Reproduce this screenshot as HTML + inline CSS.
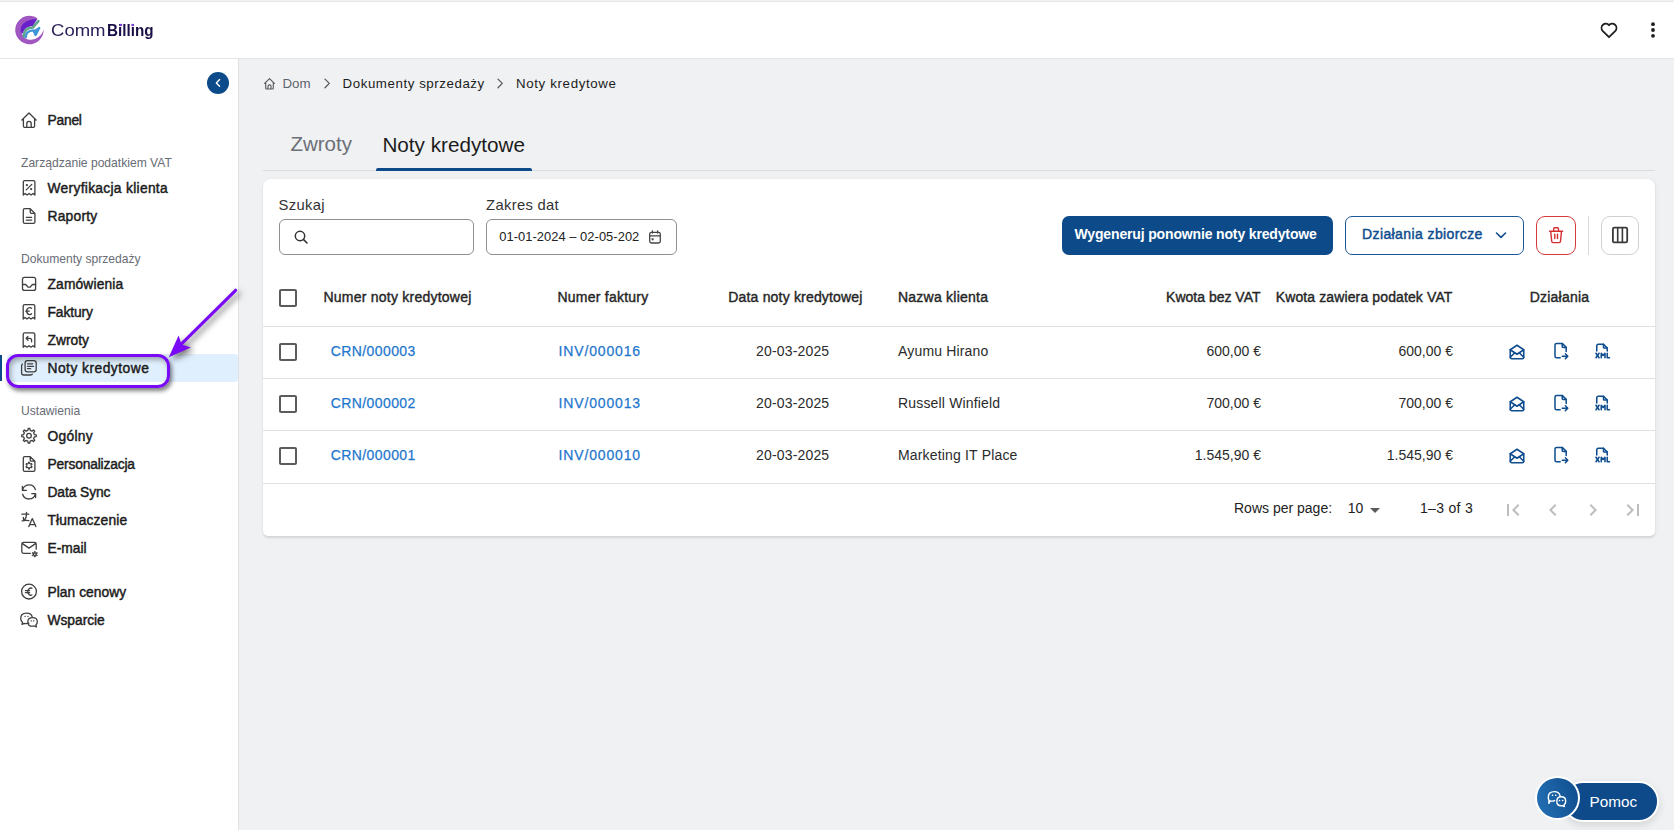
<!DOCTYPE html>
<html><head><meta charset="utf-8">
<style>
*{box-sizing:border-box;margin:0;padding:0}
html,body{width:1674px;height:830px;overflow:hidden;background:#f0f1f3;font-family:"Liberation Sans",sans-serif;color:#1f1f1f;position:relative}
.abs{position:absolute}
.t{position:absolute;white-space:nowrap;line-height:1}
.nav{font-size:13.8px;font-weight:400;color:#1c1c1c;letter-spacing:0.3px;-webkit-text-stroke:0.45px #1c1c1c}
.sec{font-size:12.1px;color:#686c75}
.hd{font-size:14px;font-weight:400;color:#262626;letter-spacing:0.23px;-webkit-text-stroke:0.4px #262626}
.cell{font-size:14px;color:#2b2b2b;letter-spacing:0.17px}
.lnk{font-size:14px;color:#1f77cd;letter-spacing:0.4px;-webkit-text-stroke:0.25px #1f77cd}
.rowline{position:absolute;left:263px;width:1392px;height:1px;background:#e0e0e0}
</style></head><body>
<!-- HEADER -->
<div class="abs" style="left:0;top:0;width:1674px;height:1px;background:#f1f1f1"></div><div class="abs" style="left:0;top:1px;width:1674px;height:1px;background:#e8e8e8"></div>
<div class="abs" style="left:0;top:2px;width:1674px;height:56px;background:#fff"></div>
<div class="abs" style="left:0;top:58px;width:1674px;height:1px;background:#e3e4e7"></div>

<svg class="abs" style="left:12px;top:12px" width="36" height="36" viewBox="0 0 36 36">
 <path d="M25.6 6.4 A14.2 14.2 0 1 0 31.6 17.3 C 30.2 24.5, 22 29.3, 15.8 27.4 C 11 25.8, 9 21, 9.6 17 Z" fill="#a057c2"/>
 <path d="M8.8 20.5 C 7.8 13, 12.5 7.2, 25.3 6.9 L20.8 14.3 C 15.6 14.3, 12.1 16.5, 10.9 21.5 Z" fill="#6a20c8"/>
 <path d="M11.7 24.4 C 11.8 18.4, 15.3 15.6, 20.9 15.4 L26.4 9.2" fill="none" stroke="#5ea58b" stroke-width="2.5" stroke-linecap="round"/>
 <path d="M13.6 26 C 13.6 21.2, 15.8 18.6, 21.3 18.3 L23.6 23 L27.6 15.2" fill="none" stroke="#3f95da" stroke-width="2.3" stroke-linejoin="round"/>
 <path d="M21.5 18.2 L27.9 14.6 L24 23.6 Z" fill="#3f95da"/>
</svg>
<div class="t" style="left:50.8px;top:21.5px;font-size:17px;color:#2a1f58;transform:scaleX(1.09);transform-origin:0 0">Comm</div>
<div class="t" style="left:106.6px;top:21.5px;font-size:17px;font-weight:700;color:#1b1046;transform:scaleX(0.895);transform-origin:0 0">Billing</div>

<svg class="abs" style="left:110px;top:20px" width="26" height="8" viewBox="110 20 26 8"><circle cx="121" cy="24.9" r="1.25" fill="#7b3fe4"/><circle cx="132.6" cy="24.9" r="1.25" fill="#7b3fe4"/></svg>
<!-- header right icons -->
<svg class="abs" style="left:1598px;top:18.5px" width="22" height="21" viewBox="0 0 22 21">
  <path d="M11 18.2 L4.6 11.8 A4.1 4.1 0 0 1 11 6.2 A4.1 4.1 0 0 1 17.4 11.8 Z" fill="none" stroke="#1f1f1f" stroke-width="1.8" stroke-linejoin="round"/>
</svg>
<svg class="abs" style="left:1646px;top:18px" width="14" height="24" viewBox="0 0 14 24">
  <circle cx="7" cy="6.2" r="1.9" fill="#1f1f1f"/><circle cx="7" cy="12" r="1.9" fill="#1f1f1f"/><circle cx="7" cy="17.8" r="1.9" fill="#1f1f1f"/>
</svg>

<!-- SIDEBAR -->
<div class="abs" style="left:0;top:59px;width:238px;height:771px;background:#fff"></div>
<div class="abs" style="left:238px;top:59px;width:1px;height:771px;background:#dfe0e3"></div>

<!-- collapse button -->
<svg class="abs" style="left:206px;top:71px" width="24" height="24" viewBox="0 0 24 24"><circle cx="12" cy="12" r="11" fill="#0c4a89"/><path d="M13.6 8.6 L10.3 11.9 L13.6 15.2" fill="none" stroke="#fff" stroke-width="1.4" stroke-linecap="round" stroke-linejoin="round"/></svg>

<!-- highlight -->
<div class="abs" style="left:7px;top:354px;width:231px;height:28px;background:#e0effd;border-radius:4px"></div>
<div class="abs" style="left:0;top:355px;width:2px;height:26px;background:#0c4a89"></div>

<svg class="abs" style="left:0;top:0" width="45" height="640" viewBox="0 0 45 640" fill="none" stroke="#3f3f3f" stroke-width="1.3" stroke-linecap="round" stroke-linejoin="round">
 <!-- home -->
 <path d="M21.9 120 L29 113 L36.1 120 M23.4 118.4 V126.1 Q23.4 127.4 24.7 127.4 H33.3 Q34.6 127.4 34.6 126.1 V118.4 M26.8 127.3 V123.5 A2.2 2.2 0 0 1 31.2 123.5 V127.3"/>
 <!-- receipt % -->
 <path d="M23.3 195 V182.1 Q23.3 180.6 24.8 180.6 H33.4 Q34.9 180.6 34.9 182.1 V195 L33.1 193.5 L31.1 195 L29.1 193.5 L27.1 195 L25.1 193.5 Z"/>
 <path d="M26.2 189.9 L31.8 184.4"/>
 <circle cx="26.9" cy="185.1" r="1.15" fill="#3f3f3f" stroke="none"/><circle cx="31.1" cy="189.1" r="1.15" fill="#3f3f3f" stroke="none"/>
 <!-- document -->
 <path d="M24.8 208.7 H30.2 L34.9 213.4 V221.9 Q34.9 223.3 33.5 223.3 H24.8 Q23.3 223.3 23.3 221.9 V210.2 Q23.3 208.7 24.8 208.7 Z M30.2 208.9 V212 Q30.2 213.3 31.5 213.3 H34.7 M26.3 217.3 H31.7 M26.3 220.1 H31.7"/>
 <!-- tray -->
 <rect x="22.5" y="277.4" width="13.1" height="13" rx="2"/>
 <path d="M22.5 284.5 H25.2 Q26 284.5 26.6 285.3 L27.3 286.3 Q27.9 287.2 28.8 287.2 H29.4 Q30.3 287.2 30.9 286.3 L31.6 285.3 Q32.2 284.5 33 284.5 H35.6"/>
 <!-- receipt euro -->
 <path d="M23.2 319 V306.1 Q23.2 304.6 24.7 304.6 H33.3 Q34.8 304.6 34.8 306.1 V319 L33 317.5 L31 319 L29 317.5 L27 319 L25 317.5 Z"/>
 <path d="M31.6 308.4 A3 3.5 0 1 0 31.6 313.8 M25.8 311.2 H29.2"/>
 <!-- receipt return -->
 <path d="M23.2 347.2 V334.3 Q23.2 332.8 24.7 332.8 H33.3 Q34.8 332.8 34.8 334.3 V347.2 L33 345.7 L31 347.2 L29 345.7 L27 347.2 L25 345.7 Z"/>
 <path d="M28 336.4 L26.1 338.3 L28 340.2 M26.3 338.3 H29.6 Q31.6 338.3 31.6 340.3 V341.8"/>
 <!-- copy -->
 <rect x="25.1" y="360.7" width="11.1" height="11.1" rx="2.4"/>
 <path d="M27.5 363.8 H32.7 M27.5 366.3 H33.6 M27.5 368.7 H30.6 M22.4 364.1 Q21.6 364.6 21.6 366.1 V372.9 Q21.6 375 23.7 375 H30.5 Q31.9 375 32.4 374.2"/>
 <!-- gear -->
 <path d="M27.82 430.38 L28.14 428.50 L29.86 428.50 L30.18 430.38 L31.97 431.12 L33.52 430.02 L34.73 431.23 L33.63 432.78 L34.37 434.57 L36.25 434.89 L36.25 436.61 L34.37 436.93 L33.63 438.72 L34.73 440.27 L33.52 441.48 L31.97 440.38 L30.18 441.12 L29.86 443.00 L28.14 443.00 L27.82 441.12 L26.03 440.38 L24.48 441.48 L23.27 440.27 L24.37 438.72 L23.63 436.93 L21.75 436.61 L21.75 434.89 L23.63 434.57 L24.37 432.78 L23.27 431.23 L24.48 430.02 L26.03 431.12Z"/>
 <circle cx="29" cy="435.75" r="2.3"/>
 <!-- doc gear -->
 <path d="M24.8 456.6 H30.2 L34.9 461.3 V469.9 Q34.9 471.3 33.5 471.3 H24.8 Q23.3 471.3 23.3 469.9 V458.1 Q23.3 456.6 24.8 456.6 Z M30.2 456.8 V459.9 Q30.2 461.2 31.5 461.2 H34.7"/>
 <path d="M28.38 463.49 L28.48 462.34 L29.52 462.34 L29.62 463.49 L30.51 464.00 L31.56 463.52 L32.08 464.42 L31.14 465.09 L31.14 466.11 L32.08 466.78 L31.56 467.68 L30.51 467.20 L29.62 467.71 L29.52 468.86 L28.48 468.86 L28.38 467.71 L27.49 467.20 L26.44 467.68 L25.92 466.78 L26.86 466.11 L26.86 465.09 L25.92 464.42 L26.44 463.52 L27.49 464.00Z" stroke-width="1.1"/>
 <!-- sync -->
 <path d="M22.6 490.3 A6.6 6.6 0 0 1 35.4 489.6 M22.4 486.4 V490.4 H26.3 M35.4 493.6 A6.6 6.6 0 0 1 22.6 494.3 M35.6 497.6 V493.7 H31.8"/>
 <!-- translate -->
 <path d="M21.9 514.2 H28.8 M26.5 512.3 V514.6 Q26.4 518.2 24.4 520.2 M23.3 517.5 Q23.5 519.4 23.8 520.4 M22.1 520.9 Q25.5 520.1 28.9 520.7 M28.8 526.6 L32.3 518.6 L35.9 526.6 M29.9 524.6 H34.8"/>
 <!-- mail gear -->
 <path d="M30.3 553.4 H23.6 Q21.8 553.4 21.8 551.6 V544.1 Q21.8 542.3 23.6 542.3 H34.4 Q36.2 542.3 36.2 544.1 V549.2 M22.1 543.4 L29 548.1 L35.9 543.4"/>
 <path d="M34.26 552.38 L34.35 551.34 L35.25 551.34 L35.34 552.38 L36.11 552.82 L37.05 552.37 L37.51 553.16 L36.65 553.76 L36.65 554.64 L37.51 555.24 L37.05 556.03 L36.11 555.58 L35.34 556.02 L35.25 557.06 L34.35 557.06 L34.26 556.02 L33.49 555.58 L32.55 556.03 L32.09 555.24 L32.95 554.64 L32.95 553.76 L32.09 553.16 L32.55 552.37 L33.49 552.82Z" fill="#3f3f3f" stroke-width="0.6"/><circle cx="34.8" cy="554.2" r="0.7" fill="#fff" stroke="none"/>
 <!-- euro circle -->
 <circle cx="29" cy="591.6" r="7.4"/>
 <path d="M31.9 588.2 A3.1 3.6 0 1 0 31.9 595 M25.4 590.6 H29.6 M25.4 592.7 H29.6"/>
 <!-- chat -->
 <path d="M28.9 623.2 Q27.8 623.6 26.5 623.6 Q25.3 623.6 24.2 623.3 L22 624.4 L22.5 622.2 Q20.7 620.8 20.7 618.5 Q20.7 613.1 26.5 613.1 Q31.3 613.1 32.2 616.8"/>
 <path d="M32.5 617.6 Q37.3 617.6 37.3 621.7 Q37.3 623.8 35.9 625 L36.4 627 L34.2 626 Q33.4 626.2 32.5 626.2 Q27.8 626.2 27.8 621.9 Q27.8 617.6 32.5 617.6 Z"/>
 <path d="M24.9 616.3 H25.2 M27.8 616.3 H28.1 M31.2 620.9 H31.4 M33.6 620.9 H33.8" stroke-width="1.2"/>
</svg>

<div class="t nav" style="left:47.6px;top:114.0px;letter-spacing:-0.25px">Panel</div>
<div class="t sec" style="left:21px;top:157px">Zarządzanie podatkiem VAT</div>
<div class="t nav" style="left:47.5px;top:181.7px">Weryfikacja klienta</div>
<div class="t nav" style="left:47.5px;top:209.7px;letter-spacing:0.23px">Raporty</div>
<div class="t sec" style="left:21px;top:253px">Dokumenty sprzedaży</div>
<div class="t nav" style="left:47.5px;top:278.2px;letter-spacing:0.14px">Zamówienia</div>
<div class="t nav" style="left:47.5px;top:306.0px;letter-spacing:-0.08px">Faktury</div>
<div class="t nav" style="left:47.5px;top:334.0px;letter-spacing:0.0px">Zwroty</div>
<div class="t nav" style="left:47.5px;top:361.7px;letter-spacing:0.48px">Noty kredytowe</div>
<div class="t sec" style="left:21px;top:405.1px">Ustawienia</div>
<div class="t nav" style="left:47.5px;top:430.2px">Ogólny</div>
<div class="t nav" style="left:47.5px;top:458.2px;letter-spacing:-0.17px">Personalizacja</div>
<div class="t nav" style="left:47.5px;top:486.0px;letter-spacing:-0.09px">Data Sync</div>
<div class="t nav" style="left:47.5px;top:514.0px;letter-spacing:0.14px">Tłumaczenie</div>
<div class="t nav" style="left:47.5px;top:542.2px;letter-spacing:0.0px">E-mail</div>
<div class="t nav" style="left:47.5px;top:586.2px;letter-spacing:0.04px">Plan cenowy</div>
<div class="t nav" style="left:47.5px;top:614.0px;letter-spacing:-0.03px">Wsparcie</div>

<!-- breadcrumb -->
<svg class="abs" style="left:0;top:0" width="520" height="100" viewBox="0 0 520 100" fill="none" stroke="#5a5a5a" stroke-width="1.15" stroke-linecap="round" stroke-linejoin="round">
 <path d="M264.6 83.4 L269.5 78.6 L274.4 83.4 M265.7 82.4 V88.2 Q265.7 89 266.5 89 H272.5 Q273.3 89 273.3 88.2 V82.4 M268 88.9 V86.3 A1.5 1.5 0 0 1 271 86.3 V88.9"/>
 <path d="M325 79.1 L329.3 83.4 L325 87.7" stroke-width="1.3"/>
 <path d="M498 79.1 L502.3 83.4 L498 87.7" stroke-width="1.3"/>
</svg>
<div class="t" style="left:282.5px;top:76.6px;font-size:13.3px;color:#5d636c">Dom</div>
<div class="t" style="left:342.6px;top:76.6px;font-size:13.3px;color:#1c1c1c;letter-spacing:0.56px">Dokumenty sprzedaży</div>
<div class="t" style="left:516px;top:76.6px;font-size:13.3px;color:#1c1c1c;letter-spacing:0.64px">Noty kredytowe</div>

<!-- tabs -->
<div class="t" style="left:290.4px;top:133.6px;font-size:20.5px;color:#6b6f76">Zwroty</div>
<div class="t" style="left:382.4px;top:134.6px;font-size:20.7px;color:#1c1c1c">Noty kredytowe</div>
<div class="abs" style="left:263px;top:170px;width:1392px;height:1px;background:#d9dbe0"></div>
<div class="abs" style="left:376px;top:168px;width:156px;height:3px;background:#0c4a89;border-radius:2px 2px 0 0"></div>

<!-- card -->
<div class="abs" style="left:263px;top:178.6px;width:1392px;height:357.6px;background:#fff;border-radius:8px 8px 5px 5px;box-shadow:0 1.5px 2px rgba(0,0,0,0.09), 1px 1px 5px rgba(0,0,0,0.05)"></div>

<div class="t" style="left:278.6px;top:198.3px;font-size:14.8px;color:#333;letter-spacing:0.3px">Szukaj</div>
<div class="abs" style="left:279px;top:219px;width:195px;height:36px;border:1px solid #8f8f8f;border-radius:6px"></div>
<svg class="abs" style="left:289.6px;top:225.5px" width="22" height="22" viewBox="0 0 22 22"><circle cx="10" cy="10" r="4.7" fill="none" stroke="#333" stroke-width="1.5"/><path d="M13.4 13.4 L17 17" stroke="#333" stroke-width="1.6" stroke-linecap="round"/></svg>

<div class="t" style="left:486.1px;top:198.3px;font-size:14.8px;color:#333;letter-spacing:0.3px">Zakres dat</div>
<div class="abs" style="left:486px;top:219px;width:191px;height:36px;border:1px solid #8f8f8f;border-radius:6px"></div>
<div class="t" style="left:499.2px;top:230.8px;font-size:12.9px;color:#222;letter-spacing:0.05px">01-01-2024 – 02-05-202</div>
<svg class="abs" style="left:640px;top:222px" width="30" height="30" viewBox="0 0 30 30" fill="none" stroke="#444" stroke-width="1.3" stroke-linecap="round"><rect x="9.7" y="10.4" width="10.6" height="10.6" rx="1.8"/><path d="M9.8 13.9 H20.2 M12.4 8.8 V11 M17.6 8.8 V11"/><rect x="11.6" y="16.3" width="2" height="2" fill="#444" stroke="none"/></svg>

<!-- buttons -->
<div class="abs" style="left:1062px;top:216px;width:271px;height:39px;background:#0c4a89;border-radius:7px"></div>
<div class="t" style="left:1074.5px;top:227.2px;font-size:14px;font-weight:700;color:#fff;letter-spacing:-0.15px">Wygeneruj ponownie noty kredytowe</div>
<div class="abs" style="left:1345px;top:216px;width:179px;height:39px;border:1px solid #1b5698;border-radius:7px"></div>
<div class="t" style="left:1362px;top:227.2px;font-size:14px;font-weight:400;color:#0f4d8e;letter-spacing:0.4px;-webkit-text-stroke:0.45px #0f4d8e">Działania zbiorcze</div>
<svg class="abs" style="left:1490px;top:224px" width="22" height="22" viewBox="0 0 22 22"><path d="M6.5 9 L11 13.4 L15.5 9" fill="none" stroke="#0f4d8e" stroke-width="1.6" stroke-linecap="round" stroke-linejoin="round"/></svg>
<div class="abs" style="left:1536px;top:216px;width:40px;height:39px;border:1px solid #d33a3a;border-radius:9px"></div>
<svg class="abs" style="left:1546px;top:225px" width="20" height="20" viewBox="0 0 20 20" fill="none" stroke="#d32f2f" stroke-width="1.4" stroke-linecap="round" stroke-linejoin="round"><path d="M3.6 6.3 H16.6 M7.7 6.3 V3.7 Q7.7 2.8 8.6 2.8 H11.6 Q12.5 2.8 12.5 3.7 V6.3 M4.7 6.3 L5.7 16.3 Q5.8 17.6 7.1 17.6 H13.1 Q14.4 17.6 14.5 16.3 L15.5 6.3 M8.8 9.2 V13.6 M11.5 9.2 V13.6"/></svg>
<div class="abs" style="left:1588px;top:216px;width:1px;height:39px;background:#dadada"></div>
<div class="abs" style="left:1601px;top:216px;width:38px;height:39px;border:1px solid #d0d0d0;border-radius:9px"></div>
<svg class="abs" style="left:1610px;top:225px" width="20" height="20" viewBox="0 0 20 20" fill="none" stroke="#3a3a3a" stroke-width="1.8" stroke-linejoin="round"><rect x="2.9" y="2.6" width="14.3" height="14.8" rx="1.4"/><path d="M7.7 2.6 V17.4 M12.4 2.6 V17.4" stroke-width="1.6"/></svg>

<!-- checkboxes -->
<svg class="abs" style="left:276px;top:286px" width="24" height="24" viewBox="0 0 24 24"><path fill="#5c5c5c" d="M19 5v14H5V5h14m0-2H5c-1.11 0-2 .9-2 2v14c0 1.1.89 2 2 2h14c1.11 0 2-.9 2-2V5c0-1.1-.89-2-2-2z"/></svg>
<svg class="abs" style="left:276px;top:340px" width="24" height="24" viewBox="0 0 24 24"><path fill="#5c5c5c" d="M19 5v14H5V5h14m0-2H5c-1.11 0-2 .9-2 2v14c0 1.1.89 2 2 2h14c1.11 0 2-.9 2-2V5c0-1.1-.89-2-2-2z"/></svg>
<svg class="abs" style="left:276px;top:392px" width="24" height="24" viewBox="0 0 24 24"><path fill="#5c5c5c" d="M19 5v14H5V5h14m0-2H5c-1.11 0-2 .9-2 2v14c0 1.1.89 2 2 2h14c1.11 0 2-.9 2-2V5c0-1.1-.89-2-2-2z"/></svg>
<svg class="abs" style="left:276px;top:444px" width="24" height="24" viewBox="0 0 24 24"><path fill="#5c5c5c" d="M19 5v14H5V5h14m0-2H5c-1.11 0-2 .9-2 2v14c0 1.1.89 2 2 2h14c1.11 0 2-.9 2-2V5c0-1.1-.89-2-2-2z"/></svg>

<!-- table header -->
<div class="t hd" style="left:323.5px;top:289.9px">Numer noty kredytowej</div>
<div class="t hd" style="left:557.5px;top:289.9px">Numer faktury</div>
<div class="t hd" style="left:728.3px;top:289.9px;letter-spacing:0.18px">Data noty kredytowej</div>
<div class="t hd" style="left:898px;top:289.9px">Nazwa klienta</div>
<div class="t hd" style="right:413.5px;top:289.9px;letter-spacing:0">Kwota bez VAT</div>
<div class="t hd" style="right:221.5px;top:289.9px;letter-spacing:0.12px">Kwota zawiera podatek VAT</div>
<div class="t hd" style="left:1529.7px;top:289.9px">Działania</div>
<div class="rowline" style="top:326px"></div>

<!-- rows -->
<div class="t lnk" style="left:330.8px;top:344.1px">CRN/000003</div>
<div class="t lnk" style="left:558.6px;letter-spacing:0.84px;top:344.1px">INV/000016</div>
<div class="t cell" style="left:756px;top:343.8px">20-03-2025</div>
<div class="t cell" style="left:898px;top:343.8px">Ayumu Hirano</div>
<div class="t cell" style="right:413px;top:343.8px;letter-spacing:0">600,00 €</div>
<div class="t cell" style="right:221px;top:343.8px;letter-spacing:0">600,00 €</div>
<div class="rowline" style="top:378px"></div>

<div class="t lnk" style="left:330.8px;top:396.1px">CRN/000002</div>
<div class="t lnk" style="left:558.6px;letter-spacing:0.84px;top:396.1px">INV/000013</div>
<div class="t cell" style="left:756px;top:395.8px">20-03-2025</div>
<div class="t cell" style="left:898px;top:395.8px">Russell Winfield</div>
<div class="t cell" style="right:413px;top:395.8px;letter-spacing:0">700,00 €</div>
<div class="t cell" style="right:221px;top:395.8px;letter-spacing:0">700,00 €</div>
<div class="rowline" style="top:430px"></div>

<div class="t lnk" style="left:330.8px;top:448.1px">CRN/000001</div>
<div class="t lnk" style="left:558.6px;letter-spacing:0.84px;top:448.1px">INV/000010</div>
<div class="t cell" style="left:756px;top:447.8px">20-03-2025</div>
<div class="t cell" style="left:898px;top:447.8px">Marketing IT Place</div>
<div class="t cell" style="right:413px;top:447.8px;letter-spacing:0">1.545,90 €</div>
<div class="t cell" style="right:221px;top:447.8px;letter-spacing:0">1.545,90 €</div>
<div class="rowline" style="top:483px"></div>

<svg class="abs" style="left:1508.1px;top:343.1px" width="18" height="18" viewBox="0 0 24 24" fill="none" stroke="#0f4d8e" stroke-width="2.1" stroke-linecap="round" stroke-linejoin="round"><path d="M3 9l9 6l9 -6l-9 -6l-9 6"/><path d="M21 9v10a2 2 0 0 1 -2 2h-14a2 2 0 0 1 -2 -2v-10"/><path d="M3 19l6 -6"/><path d="M15 13l6 6"/></svg>
<svg class="abs" style="left:1550.8px;top:341.4px" width="19.2" height="19.2" viewBox="0 0 24 24" fill="none" stroke="#0f4d8e" stroke-width="1.9" stroke-linecap="round" stroke-linejoin="round"><path d="M14 3v4a1 1 0 0 0 1 1h4"/><path d="M11.5 21h-4.5a2 2 0 0 1 -2 -2v-14a2 2 0 0 1 2 -2h7l5 5v5m-5 6h7m-3 -3l3 3l-3 3"/></svg>
<svg class="abs" style="left:1592.75px;top:341.5px" width="18" height="18" viewBox="0 0 24 24" fill="none" stroke="#0f4d8e" stroke-width="2.1" stroke-linecap="round" stroke-linejoin="round"><path d="M14 3v4a1 1 0 0 0 1 1h4"/><path d="M5 12v-7a2 2 0 0 1 2 -2h7l5 5v4"/><path d="M4 15l4 6"/><path d="M4 21l4 -6"/><path d="M19 15v6h3"/><path d="M11 21v-6l2.5 3l2.5 -3v6"/></svg>
<svg class="abs" style="left:1508.1px;top:395.1px" width="18" height="18" viewBox="0 0 24 24" fill="none" stroke="#0f4d8e" stroke-width="2.1" stroke-linecap="round" stroke-linejoin="round"><path d="M3 9l9 6l9 -6l-9 -6l-9 6"/><path d="M21 9v10a2 2 0 0 1 -2 2h-14a2 2 0 0 1 -2 -2v-10"/><path d="M3 19l6 -6"/><path d="M15 13l6 6"/></svg>
<svg class="abs" style="left:1550.8px;top:393.4px" width="19.2" height="19.2" viewBox="0 0 24 24" fill="none" stroke="#0f4d8e" stroke-width="1.9" stroke-linecap="round" stroke-linejoin="round"><path d="M14 3v4a1 1 0 0 0 1 1h4"/><path d="M11.5 21h-4.5a2 2 0 0 1 -2 -2v-14a2 2 0 0 1 2 -2h7l5 5v5m-5 6h7m-3 -3l3 3l-3 3"/></svg>
<svg class="abs" style="left:1592.75px;top:393.5px" width="18" height="18" viewBox="0 0 24 24" fill="none" stroke="#0f4d8e" stroke-width="2.1" stroke-linecap="round" stroke-linejoin="round"><path d="M14 3v4a1 1 0 0 0 1 1h4"/><path d="M5 12v-7a2 2 0 0 1 2 -2h7l5 5v4"/><path d="M4 15l4 6"/><path d="M4 21l4 -6"/><path d="M19 15v6h3"/><path d="M11 21v-6l2.5 3l2.5 -3v6"/></svg>
<svg class="abs" style="left:1508.1px;top:447.1px" width="18" height="18" viewBox="0 0 24 24" fill="none" stroke="#0f4d8e" stroke-width="2.1" stroke-linecap="round" stroke-linejoin="round"><path d="M3 9l9 6l9 -6l-9 -6l-9 6"/><path d="M21 9v10a2 2 0 0 1 -2 2h-14a2 2 0 0 1 -2 -2v-10"/><path d="M3 19l6 -6"/><path d="M15 13l6 6"/></svg>
<svg class="abs" style="left:1550.8px;top:445.4px" width="19.2" height="19.2" viewBox="0 0 24 24" fill="none" stroke="#0f4d8e" stroke-width="1.9" stroke-linecap="round" stroke-linejoin="round"><path d="M14 3v4a1 1 0 0 0 1 1h4"/><path d="M11.5 21h-4.5a2 2 0 0 1 -2 -2v-14a2 2 0 0 1 2 -2h7l5 5v5m-5 6h7m-3 -3l3 3l-3 3"/></svg>
<svg class="abs" style="left:1592.75px;top:445.5px" width="18" height="18" viewBox="0 0 24 24" fill="none" stroke="#0f4d8e" stroke-width="2.1" stroke-linecap="round" stroke-linejoin="round"><path d="M14 3v4a1 1 0 0 0 1 1h4"/><path d="M5 12v-7a2 2 0 0 1 2 -2h7l5 5v4"/><path d="M4 15l4 6"/><path d="M4 21l4 -6"/><path d="M19 15v6h3"/><path d="M11 21v-6l2.5 3l2.5 -3v6"/></svg>


<!-- pagination -->
<div class="t cell" style="left:1234px;top:500.9px;color:#222;letter-spacing:0">Rows per page:</div>
<div class="t cell" style="left:1347.8px;top:500.9px;color:#222;letter-spacing:0">10</div>
<svg class="abs" style="left:1363px;top:497.5px" width="24" height="24" viewBox="0 0 24 24"><path d="M7 10l5 5 5-5z" fill="#5a5a5a"/></svg>
<div class="t cell" style="left:1420px;top:500.9px;color:#222;letter-spacing:0.3px">1–3 of 3</div>
<svg class="abs" style="left:1501px;top:498px" width="24" height="24" viewBox="0 0 24 24"><path fill="#bdbdbd" d="M18.41 16.59L13.82 12l4.59-4.59L17 6l-6 6 6 6zM6 6h2v12H6z"/></svg>
<svg class="abs" style="left:1541px;top:497.7px" width="24" height="24" viewBox="0 0 24 24"><path fill="#bdbdbd" d="M15.41 16.59L10.83 12l4.58-4.59L14 6l-6 6 6 6 1.41-1.41z"/></svg>
<svg class="abs" style="left:1581px;top:497.7px" width="24" height="24" viewBox="0 0 24 24"><path fill="#bdbdbd" d="M8.59 16.59L13.17 12 8.59 7.41 10 6l6 6-6 6-1.41-1.41z"/></svg>
<svg class="abs" style="left:1621px;top:498px" width="24" height="24" viewBox="0 0 24 24"><path fill="#bdbdbd" d="M5.59 7.41L10.18 12l-4.59 4.59L7 18l6-6-6-6zM16 6h2v12h-2z"/></svg>

<!-- help widget -->
<div class="abs" style="left:1563px;top:781px;width:96px;height:40.5px;border-radius:20.25px;background:#0e4a8a;border:2px solid #fff;box-shadow:0 3px 8px rgba(0,0,0,0.12)"></div>
<div class="t" style="left:1589.5px;top:794.2px;font-size:15.3px;color:#fff">Pomoc</div>
<div class="abs" style="left:1535px;top:776.4px;width:44.8px;height:44px;border-radius:50%;background:linear-gradient(75deg,#2470b5,#0f4d8e);border:2px solid #fff"></div>
<svg class="abs" style="left:1540px;top:785px" width="35" height="27" viewBox="0 0 35 27" fill="none" stroke="#fff" stroke-width="1.4" stroke-linecap="round" stroke-linejoin="round">
 <path d="M14.6 15.6 Q13.6 16.1 12.3 16.1 Q11.2 16.1 10.2 15.8 L8.8 18.3 L9 15.3 Q8.3 14.2 8.3 12.2 Q8.3 6.6 14.4 6.6 Q19.2 6.6 20.1 10.9"/>
 <path d="M21.3 11.8 Q25.7 11.8 25.7 16.2 Q25.7 18.6 24.1 19.8 L24.3 21.6 L22.5 20.6 Q21.9 20.8 21.2 20.8 Q16.8 20.8 16.8 16.3 Q16.8 11.8 21.3 11.8 Z"/>
 <path d="M12.4 10.2 H12.6 M15.6 10.2 H15.8 M19.4 15.6 H19.6 M22.6 15.6 H22.8" stroke-width="1.5"/>
</svg>

<div class="abs" style="left:6px;top:354px;width:164px;height:34px;border:3px solid #7a0af5;border-radius:12px;box-shadow:2px 3px 4px rgba(0,0,0,0.5), inset 2px 3px 5px rgba(0,0,0,0.3)"></div>
<svg class="abs" style="left:150px;top:280px;overflow:visible;filter:drop-shadow(3px 3px 3px rgba(0,0,0,0.55))" width="100" height="90" viewBox="150 280 100 90">
 <path d="M235.6 290.3 L180.5 344.8" stroke="#7a0af5" stroke-width="3.2" stroke-linecap="round" fill="none"/>
 <path d="M168.8 357.2 L178.6 335.6 L181.6 344.6 L190.9 347.6 Z" fill="#7a0af5"/>
</svg>
</body></html>
